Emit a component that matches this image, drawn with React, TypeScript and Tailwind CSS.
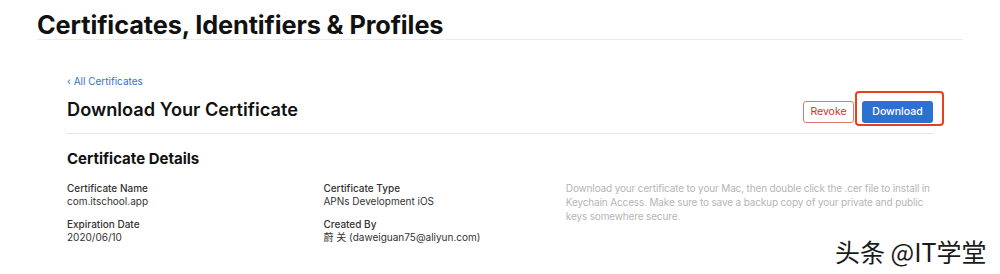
import React from "react";

export default function App() {
  return (
    <div
      className="relative w-[1000px] h-[274px] bg-white overflow-hidden text-[#1d1d1f]"
      style={{ fontFamily: "Inter, 'Noto Sans', sans-serif" }}
    >
      <div className="mx-[37px]">
        <h1 className="pt-[11px] text-[25.3px] leading-[28px] font-bold tracking-[-0.1px] border-b border-[#ececec] text-[#111]">
          Certificates, Identifiers &amp; Profiles
        </h1>
        <div className="px-[30px]">
          <a className="block mt-[34px] text-[10px] leading-[14px] text-[#2f72d1]">
            ‹ All Certificates
          </a>
          <div className="flex items-start justify-between border-b border-[#e5e5e5] pb-[10px]">
            <h2 className="mt-[9px] text-[18.2px] leading-[24px] font-semibold text-[#111]">
              Download Your Certificate
            </h2>
            <div className="mt-[13px] flex items-center gap-[8px]">
              <button className="flex items-center justify-center h-[22px] w-[51px] rounded-[3px] border border-[#dc7774] text-[10.5px] text-[#d0312d] bg-white">
                Revoke
              </button>
              <div className="relative flex">
                <button className="flex items-center justify-center h-[22px] w-[71px] rounded-[3px] bg-[#2d71d0] text-[10.5px] font-medium text-white">
                  Download
                </button>
                <div className="absolute left-[-7px] top-[-10px] w-[89px] h-[35px] border-2 border-[#e8401f] rounded-[4px]" />
              </div>
            </div>
          </div>
          <h3 className="mt-[15px] text-[15px] leading-[20px] font-bold text-[#111]">
            Certificate Details
          </h3>
          <div className="mt-[13px] flex">
            <div className="w-[257px] flex flex-col gap-[10px] text-[10px] leading-[13px] text-[#333]">
              <div>
                <div className="font-medium">Certificate Name</div>
                <div>com.itschool.app</div>
              </div>
              <div>
                <div className="font-medium">Expiration Date</div>
                <div>2020/06/10</div>
              </div>
            </div>
            <div className="w-[243px] flex flex-col gap-[10px] text-[10px] leading-[13px] text-[#333]">
              <div>
                <div className="font-medium">Certificate Type</div>
                <div>APNs Development iOS</div>
              </div>
              <div>
                <div className="font-medium">Created By</div>
                <div style={{ fontFamily: "Inter, 'Noto Sans CJK SC', sans-serif" }}>
                  蔚 关 (daweiguan75@aliyun.com)
                </div>
              </div>
            </div>
            <p className="w-[368px] -mt-[1px] text-[10px] leading-[14px] tracking-[-0.15px] text-[#b5b5b5]">
              Download your certificate to your Mac, then double click the .cer file to install in
              Keychain Access. Make sure to save a backup copy of your private and public keys
              somewhere secure.
            </p>
          </div>
        </div>
      </div>
      <div
        className="absolute left-[835px] top-[237px] text-[25px] leading-[28px] text-[#1a1a1a] whitespace-nowrap"
        style={{ fontFamily: "'Noto Sans CJK SC', sans-serif" }}
      >
        头条 @IT学堂
      </div>
    </div>
  );
}
